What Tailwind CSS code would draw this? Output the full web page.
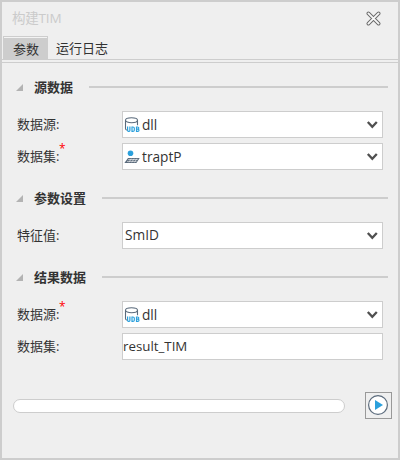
<!DOCTYPE html>
<html lang="zh-CN">
<head>
<meta charset="utf-8">
<title>构建TIM</title>
<script src="https://cdn.jsdelivr.net/npm/@tailwindcss/browser@4"></script>
</head>
<body class="bg-[#efefef]">
<svg class="hidden">
  <symbol id="chevron" viewBox="0 0 12 8"><path d="M1.8 1 6.3 5.9 10.8 1" fill="none" stroke="#505050" stroke-width="2.3"/></symbol>
  <symbol id="udb" viewBox="0 0 16 17">
    <g fill="none" stroke="#5b6b7c" stroke-width="1.1"><ellipse cx="7.5" cy="4.3" rx="6" ry="2.5"/><path d="M1.5 4.3v8.2c0 .9.4 1.4 1.3 1.8M13.5 4.3v5"/></g>
    <g fill="none" stroke="#2ba0dc" stroke-width="1.2"><path d="M3.6 10.4v4.2q0 .8.8.8h.7q.8 0 .8-.8V10.4M8 11v4.4h.9q1.4 0 1.4-1.2v-2q0-1.2-1.4-1.2zM12.5 11v4.4h1.3q1.2 0 1.2-1.1t-1.2-1.1h-1.3 1.1q1.2 0 1.2-1.1t-1.2-1.1z"/></g>
  </symbol>
  <symbol id="triangle" viewBox="0 0 7 7"><path d="M7 0v7H0z" fill="#b3b3b3"/></symbol>
</svg>
<main class="flex h-[460px] w-[400px] flex-col border-2 border-[#cdcdcd] bg-[#efefef] text-[13px] leading-5 text-[#333] [font-family:'Open_Sans','Noto_Sans_CJK_SC',sans-serif]">
  <header class="flex h-[34px] shrink-0 items-center justify-between pr-[17px] pl-[10px]">
    <h1 class="pb-[2px] text-[13.5px] tracking-[-0.2px] text-[#cbcbcb]">构建TIM</h1>
    <svg class="mb-px size-[15px]" viewBox="0 0 15 15" fill="none" stroke-linecap="round"><path d="M2.4 2.4 12.6 12.6M12.6 2.4 2.4 12.6" stroke="#686868" stroke-width="3.7"/><path d="M2.4 2.4 12.6 12.6M12.6 2.4 2.4 12.6" stroke="#f7f7f7" stroke-width="1.9"/></svg>
  </header>
  <nav class="flex h-6 shrink-0 border-b border-[#cdcdcd] pl-px">
    <div class="h-6 w-[45px] border border-b-0 border-[#cdcdcd] bg-[#cdcdcd]"><div class="h-[22px] border-t border-[#f3f3f3] pl-[9px] leading-[22px] whitespace-nowrap">参数</div></div>
    <div class="pl-[8px] leading-[25px]">运行日志</div>
  </nav>
  <div class="mt-[2px] h-px shrink-0 bg-[#cdcdcd]"></div>

  <section class="mt-3">
    <h2 class="mr-[10px] ml-[14px] flex h-6 items-center font-bold"><svg class="mt-px mr-[11px] size-[7px]"><use href="#triangle"/></svg><span class="pb-px">源数据</span><span class="ml-4 h-0.5 flex-1 bg-[#cdcdcd]"></span></h2>
    <div class="mt-3 flex flex-col gap-[5px] pl-[15px]">
      <div class="flex h-[27px] items-center"><label class="w-[105px] pb-[2px]">数据源:</label>
        <div class="flex h-[27px] w-[261px] items-center border border-[#cdcdcd] bg-white pr-1 pl-px text-[13.7px]"><svg class="mr-[2px] h-[17px] w-4"><use href="#udb"/></svg><span class="flex-1">dll</span><svg class="h-2 w-3"><use href="#chevron"/></svg></div></div>
      <div class="flex h-[27px] items-center"><label class="relative w-[105px] pb-[2px]">数据集:<span class="absolute -top-[7px] left-[42px] text-[12px] text-[#f00]">*</span></label>
        <div class="flex h-[27px] w-[261px] items-center border border-[#cdcdcd] bg-white pr-1 pl-px text-[13.7px]">
          <svg class="mr-[2px] h-[17px] w-4" viewBox="0 0 16 17"><circle cx="6.5" cy="5.3" r="2.8" fill="#2ba0dc"/><path d="M4 10H15.7L12.4 15H0.4z" fill="#5b6b7c"/><path d="M4.2 11.5H13.7M3 13.4H12.5M7.2 10.7 5 14.3M10 10.7 7.8 14.3M12.8 10.7 10.6 14.3" stroke="#e5e8eb" stroke-width=".7"/></svg><span class="flex-1">traptP</span><svg class="h-2 w-3"><use href="#chevron"/></svg></div></div>
    </div>
  </section>

  <section class="mt-4">
    <h2 class="mr-[10px] ml-[14px] flex h-6 items-center font-bold"><svg class="mt-px mr-[11px] size-[7px]"><use href="#triangle"/></svg><span class="pb-px">参数设置</span><span class="ml-4 h-0.5 flex-1 bg-[#cdcdcd]"></span></h2>
    <div class="mt-3 flex h-[27px] items-center pl-[15px]"><label class="w-[105px] pb-[2px]">特征值:</label>
      <div class="flex h-[27px] w-[261px] items-center border border-[#cdcdcd] bg-white pr-1 pl-[2px] text-[13.7px]"><span class="flex-1 pb-px">SmID</span><svg class="h-2 w-3"><use href="#chevron"/></svg></div></div>
  </section>

  <section class="mt-4">
    <h2 class="mr-[10px] ml-[14px] flex h-6 items-center font-bold"><svg class="mt-px mr-[11px] size-[7px]"><use href="#triangle"/></svg><span class="pb-px">结果数据</span><span class="ml-4 h-0.5 flex-1 bg-[#cdcdcd]"></span></h2>
    <div class="mt-3 flex flex-col gap-[5px] pl-[15px]">
      <div class="flex h-[27px] items-center"><label class="relative w-[105px] pb-[2px]">数据源:<span class="absolute -top-[7px] left-[42px] text-[12px] text-[#f00]">*</span></label>
        <div class="flex h-[27px] w-[261px] items-center border border-[#cdcdcd] bg-white pr-1 pl-px text-[13.7px]"><svg class="mr-[2px] h-[17px] w-4"><use href="#udb"/></svg><span class="flex-1">dll</span><svg class="h-2 w-3"><use href="#chevron"/></svg></div></div>
      <div class="flex h-[27px] items-center"><label class="w-[105px] pb-[2px]">数据集:</label>
        <div class="flex h-[27px] w-[261px] items-center border border-[#cdcdcd] bg-white pb-px text-[13.3px]">result_TIM</div></div>
    </div>
  </section>

  <footer class="mt-8 flex h-[27px] items-center pl-[11px]">
    <div class="mr-5 h-[14px] w-[332px] rounded-full border border-[#cdcdcd] bg-white"></div>
    <button class="flex size-[27px] items-center justify-center border border-[#999]" aria-label="运行"><svg class="size-[21px]" viewBox="0 0 21 21"><circle cx="10" cy="10" r="9.4" fill="#fff" stroke="#5b6b7c" stroke-width="1.2"/><path d="M7 5v10l8-5z" fill="#2ba0dc"/></svg></button>
  </footer>
</main>
</body>
</html>
